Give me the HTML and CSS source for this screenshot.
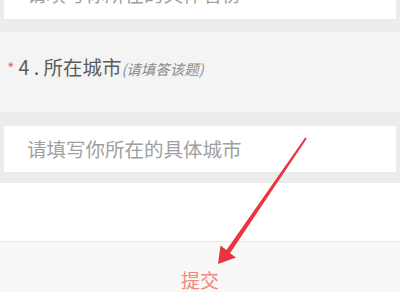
FILE: index.html
```
<!DOCTYPE html>
<html lang="zh-CN">
<head>
  <meta charset="UTF-8"/>
  <meta name="viewport" content="width=device-width, initial-scale=1.0"/>
  <title>问卷</title>
  <link rel="stylesheet" href="styles.css">
</head>
<body>
  <div class="page">
    <div class="field field-first">
      <div class="input">请填写你所在的具体省份</div>
    </div>

    <div class="question">
      <span class="req">*</span>4 . 所在城市<span class="hint">(请填答该题)</span>
    </div>

    <div class="field">
      <div class="input">请填写你所在的具体城市</div>
    </div>

    <div class="blank"></div>

    <div class="footer">提交</div>
  </div>

  <!-- red arrow pointing at the submit button -->
  <svg class="arrow" width="400" height="300" viewBox="0 0 400 300">
    <polygon points="306.8,138.6 230,253.2 236,257.5 218,264 220.5,245.5 226.5,250 305.2,137.4" fill="#e8353f"/>
  </svg>
</body>
</html>
```

FILE: styles.css
```
body { margin:0; background:#fff; font-family:"Noto Sans CJK SC", "Noto Sans", sans-serif; overflow:hidden; }
.page { margin-top:-41px; }
.field { background:#ececec; padding:14px 4px 11px; }
.field-first { padding-bottom:13px; }
.input { background:#fff; height:46px; line-height:46px; padding-left:23px; font-size:19.5px; color:#a0a0a0; white-space:nowrap; overflow:hidden; }
.field-first .input { line-height:42px; }
.question { background:#f4f4f4; padding:23px 0 31px 7px; line-height:24px; font-size:19.5px; color:#5c5c5c; white-space:nowrap; }
.req { color:#ef6a6a; font-size:16px; margin-right:4px; }
.hint { font-size:14.5px; font-style:italic; color:#8a8a8a; }
.blank { background:#fff; height:58px; border-bottom:1px solid #e8e8e8; }
.footer { background:#f8f8f8; height:50px; box-sizing:border-box; padding-top:27px; line-height:22px; text-align:center; font-size:19px; color:#f2897b; }
.arrow { position:absolute; left:0; top:0; }
```
